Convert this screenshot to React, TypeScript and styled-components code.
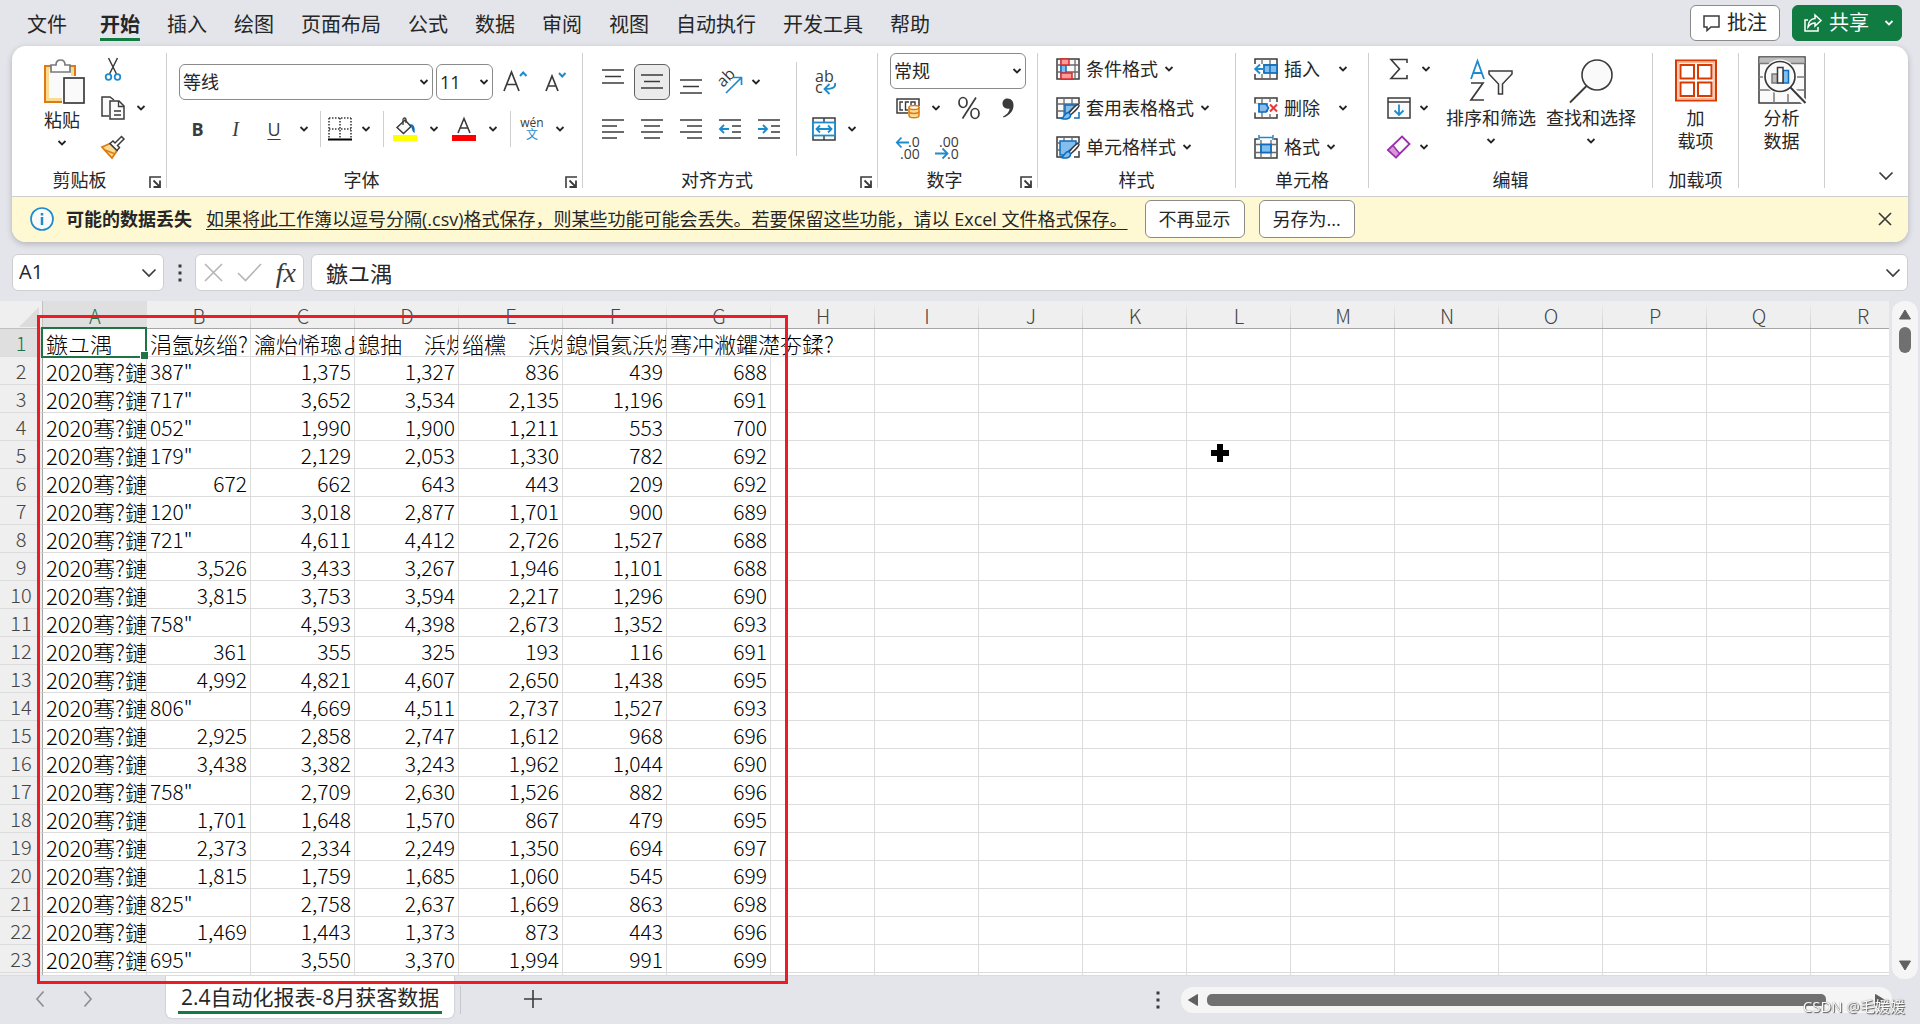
import React from "react";
import styled, { createGlobalStyle, css } from "styled-components";

const INK = "#3b3b3b";
const BLUE = "#1e8bcd";
const DEEP = "#0f6cbd";
const SKY = "#83beec";
const GREEN = "#107c41";
const LINE = "#cfcfcf";

const UI_FONT = `"Open Sans", "Noto Sans CJK SC", sans-serif`;
const CELL_FONT = `"Noto Sans CJK SC", sans-serif`;

const GlobalStyle = createGlobalStyle`
  * { box-sizing: border-box; }
  body { margin: 0; background: #e4e5ea; }
  button, input, select { font: inherit; color: inherit; margin: 0; }
  button { padding: 0; border: 0; background: none; }
  svg { flex: none; overflow: visible; }
`;

const Window = styled.div`
  display: flex;
  flex-direction: column;
  height: 100vh;
  overflow: hidden;
  font-family: ${UI_FONT};
  font-size: 18px;
  line-height: 20px;
  color: #262626;
`;

/* ---------- top bar ---------- */
const TopBar = styled.header`
  display: flex;
  justify-content: space-between;
  height: 46px;
  flex: none;
  padding: 5px 18px 5px 27px;
`;
const Tabs = styled.nav`
  display: flex;
  align-items: flex-start;
  gap: 27px;
  padding-top: 5px;
`;
const Tab = styled.a<{ $active?: boolean }>`
  height: 31px;
  font-size: 20px;
  line-height: 30px;
  text-decoration: none;
  color: inherit;
  white-space: nowrap;
  font-weight: ${(p) => (p.$active ? 700 : 400)};
  background: linear-gradient(${(p) => (p.$active ? GREEN : "transparent")} 0 100%) bottom / 100% 3px no-repeat;
  &:first-child { margin-right: 6px; }
`;
const TopActions = styled.div`
  display: flex;
  gap: 12px;
`;
const TopButton = styled.button<{ $primary?: boolean }>`
  display: flex;
  align-items: center;
  gap: 7px;
  height: 36px;
  padding: 0 12px;
  font-size: 20px;
  border-radius: 6px;
  border: 1px solid ${(p) => (p.$primary ? GREEN : "#8a8a8a")};
  background: ${(p) => (p.$primary ? GREEN : "#fff")};
  color: ${(p) => (p.$primary ? "#fff" : "#262626")};
  ${(p) => p.$primary && css`padding: 0 7px 0 11px; & > svg:last-child { margin-left: 8px; }`}
`;

/* ---------- ribbon ---------- */
const Panel = styled.section`
  flex: none;
  margin: 0 12px;
  border-radius: 14px;
  background: #fff;
  box-shadow: 0 2px 6px rgba(0, 0, 0, 0.22);
  overflow: hidden;
`;
const Ribbon = styled.div`
  display: flex;
  padding: 7px 0 8px;
  border-bottom: 1px solid ${LINE};
`;
const Group = styled.section<{ $w: number }>`
  display: flex;
  flex-direction: column;
  flex: none;
  width: ${(p) => p.$w}px;
  height: 135px;
  border-right: 1px solid ${LINE};
`;
const Body = styled.div<{ $pad?: number; $center?: boolean }>`
  flex: 1;
  display: flex;
  align-items: flex-start;
  padding-left: ${(p) => p.$pad ?? 0}px;
  justify-content: ${(p) => (p.$center ? "center" : "flex-start")};
`;
const Footer = styled.div<{ $shift?: boolean }>`
  display: flex;
  align-items: flex-end;
  height: 18px;
  line-height: 18px;
  padding-left: ${(p) => (p.$shift ? 7 : 0)}px;
`;
const FooterLabel = styled.span`
  flex: 1;
  text-align: center;
  line-height: 16px;
`;
const Launcher = styled.button`
  display: flex;
  width: 26px;
  padding-left: 9px;
`;
const Stack = styled.div`
  display: flex;
  flex-direction: column;
  gap: 13px;
  padding-top: 3px;
`;
const Line = styled.div<{ $gap?: number }>`
  display: flex;
  align-items: center;
  height: 26px;
  gap: ${(p) => p.$gap ?? 0}px;
`;
const ToolRows = styled.div`
  display: flex;
  flex-direction: column;
  gap: 11px;
  padding-top: 11px;
`;
const ToolRow = styled.div<{ $gap?: number }>`
  display: flex;
  align-items: center;
  height: 36px;
  gap: ${(p) => p.$gap ?? 0}px;
`;
const Tool = styled.button<{ $w?: number; $on?: boolean }>`
  display: flex;
  align-items: center;
  justify-content: center;
  width: ${(p) => p.$w ?? 36}px;
  height: 36px;
  border-radius: 6px;
  ${(p) => p.$on && css`background: #ebebeb; border: 1px solid #616161;`}
`;
const IconButton = styled.button`
  display: flex;
  align-items: center;
  justify-content: center;
  width: 24px;
  height: 26px;
`;
const ClipButton = styled(IconButton)`
  margin-left: 16px;
`;
const NumberStack = styled.div`
  display: flex;
  flex-direction: column;
  gap: 13px;
  & > label { margin-bottom: -7px; }
`;
const NumberLine = styled(Line)`
  padding-left: 6px;
`;
const Rule = styled.span<{ $h?: number }>`
  width: 1px;
  height: ${(p) => p.$h ?? 36}px;
  margin: 0 5px;
  background: ${LINE};
`;
const TallRule = styled.span`
  width: 1px;
  height: 94px;
  margin: 9px 11px 0 9px;
  background: ${LINE};
`;
const Letter = styled.span<{ $kind: "b" | "i" | "u" }>`
  font-size: 18px;
  color: ${INK};
  ${(p) => p.$kind === "b" && css`font-weight: 700;`}
  ${(p) => p.$kind === "i" && css`font-family: "Liberation Serif", serif; font-style: italic; font-size: 20px;`}
  ${(p) => p.$kind === "u" && css`text-decoration: underline; text-underline-offset: 3px; text-decoration-thickness: 1px;`}
`;
const Pinyin = styled.span`
  display: flex;
  flex-direction: column;
  align-items: center;
  font-size: 12px;
  line-height: 12px;
  color: ${INK};
  & > span { color: ${BLUE}; }
`;
const SelectBox = styled.label<{ $w: number }>`
  position: relative;
  display: flex;
  width: ${(p) => p.$w}px;
  height: 36px;
  & > svg { position: absolute; right: 4px; top: 14px; pointer-events: none; }
`;
const Select = styled.select`
  appearance: none;
  width: 100%;
  padding: 0 0 1px 3px;
  border: 1px solid #8a8a8a;
  border-radius: 6px;
  background: #fff;
`;
const BigButton = styled.button<{ $w: number; $top?: number; $gap?: number }>`
  display: flex;
  flex-direction: column;
  align-items: center;
  flex: none;
  width: ${(p) => p.$w}px;
  padding-top: ${(p) => p.$top ?? 6}px;
  line-height: 23px;
  white-space: nowrap;
  & > span { margin: ${(p) => p.$gap ?? 3}px 0 7px; }
`;
const LabelButton = styled.button<{ $wide?: boolean }>`
  display: flex;
  align-items: center;
  height: 26px;
  gap: 6px;
  line-height: 24px;
  white-space: nowrap;
  & > svg:last-child { margin-left: ${(p) => (p.$wide ? 12 : 0)}px; }
`;
const Collapse = styled.button`
  margin-left: auto;
  align-self: flex-end;
  padding: 0 14px 4px;
`;

/* ---------- notice ---------- */
const Notice = styled.div`
  display: flex;
  align-items: center;
  height: 45px;
  padding: 0 16px 2px 18px;
  background: #fef9d3;
  white-space: nowrap;
`;
const NoticeTitle = styled.strong`
  margin: 0 14px 0 12px;
`;
const NoticeLink = styled.a`
  color: inherit;
  text-underline-offset: 3px;
  text-decoration-thickness: 1px;
  margin-right: 17px;
`;
const NoticeButton = styled.button`
  height: 38px;
  padding: 0 13px;
  margin-right: 14px;
  border: 1px solid #8a8a8a;
  border-radius: 6px;
  background: #fff;
`;
const Close = styled.button`
  display: flex;
  margin-left: auto;
`;

/* ---------- formula bar ---------- */
const FormulaBar = styled.div`
  display: flex;
  align-items: center;
  flex: none;
  height: 37px;
  margin: 12px 12px 10px;
`;
const Field = styled.div<{ $w?: number }>`
  display: flex;
  align-items: center;
  height: 37px;
  border: 1px solid ${LINE};
  border-radius: 6px;
  background: #fff;
  ${(p) => (p.$w ? css`width: ${p.$w}px; flex: none;` : css`flex: 1;`)}
  padding-right: 6px;
`;
const TextInput = styled.input<{ $size: number; $pad: number }>`
  flex: 1;
  min-width: 0;
  border: 0;
  outline: 0;
  background: none;
  padding: 0 0 2px ${(p) => p.$pad}px;
  font-size: ${(p) => p.$size}px;
`;
const DotsWrap = styled.span`
  display: flex;
  justify-content: center;
  width: 31px;
`;
const BottomDots = styled(DotsWrap)`
  margin-right: 8px;
`;
const FormulaTools = styled(Field)`
  justify-content: space-between;
  padding: 0 7px 0 8px;
  margin-right: 7px;
  & > button { display: flex; }
`;
const Fx = styled.button`
  font-family: "Liberation Serif", serif;
  font-style: italic;
  font-size: 28px;
  line-height: 28px;
  color: ${INK};
`;

/* ---------- sheet ---------- */
const Sheet = styled.main`
  position: relative;
  display: flex;
  flex: 1;
  min-height: 0;
  padding-right: 2px;
`;
const GridWrap = styled.div`
  flex: 1;
  min-width: 0;
  overflow: hidden;
  background: #fff;
  border-bottom: 1px solid #dcdcdc;
  margin-right: 3px;
`;
const Table = styled.table`
  table-layout: fixed;
  width: 1915px;
  border-collapse: separate;
  border-spacing: 0;
  font-family: ${CELL_FONT};
  font-weight: 300;
  font-size: 21px;
  line-height: 24px;
  color: #000;
`;
const RowHeadCol = styled.col`
  width: 43px;
`;
const DataCol = styled.col`
  width: 104px;
`;
const ColHead = styled.th<{ $on?: boolean }>`
  height: 28px;
  padding: 2px 0 0;
  font-weight: 300;
  font-size: 20px;
  line-height: 22px;
  color: ${(p) => (p.$on ? "#1e7145" : "#444")};
  background: ${(p) =>
    p.$on
      ? "#dfdfdf"
      : "linear-gradient(#efefef, #cfcfcf) right / 1px 100% no-repeat, #efefef"};
  border-bottom: 1px solid #a6a6a6;
`;
const Corner = styled.td`
  height: 28px;
  padding: 4px 3px 0 19px;
  background: #efefef;
  border-right: 1px solid #c0c0c0;
  border-bottom: 1px solid #c0c0c0;
  & > svg { display: block; }
`;
const RowHead = styled.th<{ $on?: boolean }>`
  height: 28px;
  padding: 1px 0 0;
  font-weight: 300;
  font-size: 20px;
  color: ${(p) => (p.$on ? "#1e7145" : "#444")};
  background: ${(p) => (p.$on ? "#dfdfdf" : "#efefef")};
  border-right: 1px solid #a6a6a6;
  border-bottom: 1px solid #dcdcdc;
`;
const Cell = styled.td<{ $num?: boolean; $big?: boolean; $clip?: boolean; $spill?: boolean; $sel?: boolean }>`
  height: 28px;
  padding: 1px 3px 0;
  font-size: ${(p) => (p.$big ? 22 : 21)}px;
  text-align: ${(p) => (p.$num ? "right" : "left")};
  white-space: nowrap;
  overflow: ${(p) => (p.$clip ? "hidden" : "visible")};
  text-overflow: clip;
  border-right: 1px solid #dcdcdc;
  border-bottom: 1px solid #dcdcdc;
  ${(p) => p.$spill && css`border-right-color: transparent; position: relative; z-index: 1;`}
  ${(p) => p.$sel && css`position: relative; z-index: 2;`}
`;
const Selection = styled.span`
  position: absolute;
  inset: -2px -1px -2px -2px;
  border: 2px solid #217346;
  &::after {
    content: "";
    position: absolute;
    right: -3px;
    bottom: -3px;
    width: 7px;
    height: 7px;
    background: #217346;
    border-top: 1px solid #fff;
    border-left: 1px solid #fff;
  }
`;
const Frame = styled.div`
  position: absolute;
  left: 37px;
  top: 14px;
  width: 751px;
  bottom: -8px;
  border: 3px solid #ed1c24;
  pointer-events: none;
  z-index: 5;
`;
const Pointer = styled.svg`
  position: absolute;
  left: 1210px;
  top: 142px;
`;
const VScroll = styled.div`
  display: flex;
  flex-direction: column;
  align-items: center;
  width: 26px;
  margin-bottom: -3px;
  padding: 8px 0 8px;
  border-radius: 12px;
  background: #f5f5f5;
`;
const VThumb = styled.div`
  width: 12px;
  height: 26px;
  margin: 7px 0 auto;
  border-radius: 6px;
  background: #707070;
`;

/* ---------- bottom bar ---------- */
const BottomBar = styled.footer`
  display: flex;
  align-items: center;
  flex: none;
  height: 48px;
  padding-right: 28px;
`;
const SheetNav = styled.div`
  display: flex;
  gap: 38px;
  width: 166px;
  padding: 0 0 2px 35px;
  & > button { display: flex; }
`;
const SheetTab = styled.a`
  align-self: flex-start;
  height: 42px;
  padding: 7px 12px 0;
  border-radius: 0 0 6px 6px;
  background: #fff;
  box-shadow: 0 0 2px rgba(0, 0, 0, 0.25);
  clip-path: inset(0 -2px -3px -2px);
  color: inherit;
  text-decoration: none;
  font-size: 21px;
  line-height: 28px;
  white-space: nowrap;
  & > span {
    display: block;
    border-bottom: 3px solid ${GREEN};
    padding: 0 3px;
  }
`;
const AddSheet = styled.button`
  display: flex;
  margin-left: 63px;
  padding-bottom: 2px;
`;
const TabRule = styled.span`
  width: 1px;
  height: 28px;
  margin-left: 6px;
  background: #c8c8cc;
`;
const HScroll = styled.div`
  display: flex;
  align-items: center;
  width: 711px;
  height: 26px;
  padding: 0 6px;
  border-radius: 12px;
  background: #f5f5f5;
`;
const HThumb = styled.div`
  flex: 1;
  height: 12px;
  margin: 0 48px 0 8px;
  border-radius: 5px;
  background: #707070;
`;
const Spacer = styled.span`
  flex: 1;
`;
const Watermark = styled.span`
  position: fixed;
  right: 15px;
  bottom: 8px;
  font-size: 15px;
  color: #fafafa;
  text-shadow: 1px 1px 1px #555, 0 0 1px #777;
`;

/* ---------- icons ---------- */
type IconProps = { w?: number; h?: number; children: React.ReactNode };
const Icon = ({ w = 24, h = 24, children }: IconProps) => (
  <svg width={w} height={h} viewBox={`0 0 ${w} ${h}`} fill="none" stroke={INK} strokeWidth="1.5" aria-hidden="true">
    {children}
  </svg>
);
const Chevron = ({ color = "#262626" }: { color?: string }) => (
  <svg width="10" height="8" viewBox="0 0 10 8" fill="none" stroke={color} strokeWidth="1.8" aria-hidden="true">
    <path d="M1.5 2L5 5.5L8.5 2" />
  </svg>
);
const BigChevron = () => (
  <svg width="16" height="10" viewBox="0 0 16 10" fill="none" stroke={INK} strokeWidth="1.7" aria-hidden="true">
    <path d="M1.5 1.5L8 8L14.5 1.5" />
  </svg>
);
const LaunchIcon = () => (
  <Icon w={12} h={12}>
    <path d="M1 12V1H12" strokeWidth="1.6" />
    <path d="M4.5 4.5L10.5 10.5M11 4.5V11H4.5" strokeWidth="1.8" />
  </Icon>
);
const Dots = () => (
  <Icon w={4} h={18}>
    <path d="M2 0.5V3.5M2 7.500V10.500M2 14.500V17.500" strokeWidth="3" />
  </Icon>
);
const PasteIcon = () => (
  <Icon w={46} h={45}>
    <rect x="6" y="7" width="30" height="36" fill="#f8dc94" stroke="#e07a10" strokeWidth="2" />
    <rect x="10" y="10" width="22" height="29" fill="#fafafa" stroke="none" />
    <path d="M12 13V6H17C17 2.500 19 1 21.500 1S26 2.500 26 6H31V13Z" fill="#fff" stroke="#7a7a7a" strokeWidth="1.7" />
    <rect x="23" y="17" width="23" height="28" fill="#fff" stroke="none" />
    <rect x="25" y="19" width="20" height="25" fill="#fafafa" strokeWidth="1.7" />
  </Icon>
);
const CutIcon = () => (
  <Icon>
    <path d="M7.500 1L15.500 17M16.500 1L8.500 17" />
    <circle cx="7.500" cy="20" r="2.800" stroke={BLUE} strokeWidth="1.800" />
    <circle cx="16.500" cy="20" r="2.800" stroke={BLUE} strokeWidth="1.800" />
  </Icon>
);
const CopyIcon = () => (
  <Icon>
    <path d="M8 20H1V1H9L13 4" fill="#fafafa" />
    <path d="M9 5H18L23 10V23H9Z" fill="#fafafa" />
    <path d="M17.500 5V10.500H23M13 15H20M13 19H20" strokeWidth="1.300" />
  </Icon>
);
const BrushIcon = () => (
  <Icon>
    <path d="M1 12L9 8.500L16 15.500L11 23Z" fill="#f8dc94" stroke="#e07a10" strokeWidth="1.800" />
    <path d="M4 15L13 18.500" stroke="#e07a10" />
    <path d="M9 8.500L12 6L14 8L20.500 1.500L23 4L16.500 10.500L18.500 12.500L16 15.500Z" fill="#fff" />
  </Icon>
);
const FontSizeIcon = ({ up }: { up?: boolean }) =>
  up ? (
    <Icon w={24} h={24}>
      <path d="M1 21L8.500 2L16 21M3.500 14.500H13.500" strokeWidth="1.700" />
      <path d="M17 6L20.200 2.500L23.500 6" stroke={BLUE} strokeWidth="2" />
    </Icon>
  ) : (
    <Icon w={22} h={24}>
      <path d="M1 21L7 6L13 21M3 16H11" strokeWidth="1.700" />
      <path d="M14 3L17.200 6.500L20.500 3" stroke={BLUE} strokeWidth="2" />
    </Icon>
  );
const BorderIcon = () => (
  <Icon>
    <path d="M1 1H23M1 12H23M1 1V21M12 1V21M23 1V21" strokeDasharray="1.500 1.500" strokeWidth="1.600" />
    <path d="M0 22.500H24" stroke="#000" strokeWidth="2" />
  </Icon>
);
const FillIcon = () => (
  <Icon>
    <path d="M4 10.500L12 3L18 9.500L10.500 16.500Z" fill="#fafafa" />
    <path d="M10 8V2.500C10 .500 13 .500 13 2.500V6" strokeWidth="1.300" />
    <path d="M17 7C20.500 7 22.500 10 21.500 16C20 15.500 19 13 18.500 10.500Z" fill={DEEP} stroke="none" />
    <rect x="0" y="18" width="24" height="6" fill="#ffff00" stroke="none" />
  </Icon>
);
const FontColorIcon = () => (
  <Icon>
    <path d="M6 16L12 1.500L18 16M8 11H16" strokeWidth="1.600" />
    <rect x="0" y="18" width="24" height="6" fill="#ff0000" stroke="none" />
  </Icon>
);
const LinesIcon = ({ d, dy = 0 }: { d: [number, number][]; dy?: number }) => (
  <Icon w={22} h={24}>
    {d.map(([a, b], i) => (
      <path key={i} d={`M${a} ${3 + dy + i * (d.length === 4 ? 6 : 6.5)}H${b}`} strokeWidth="1.600" />
    ))}
  </Icon>
);
const IndentIcon = ({ right }: { right?: boolean }) => (
  <Icon w={22} h={24}>
    <path d="M0 3H22M13 9H22M13 15H22M0 21H22" strokeWidth="1.600" />
    <path d={right ? "M0 12H9M5 8L9 12L5 16" : "M10 12H1M5 8L1 12L5 16"} stroke={BLUE} strokeWidth="1.900" />
  </Icon>
);
const OrientIcon = () => (
  <Icon w={26} h={26}>
    <text x="0" y="0" transform="translate(6 19) rotate(-45)" fontSize="16" fill={INK} stroke="none">ab</text>
    <path d="M9 24L24 9M16.500 8.500H24.500V16" stroke={BLUE} strokeWidth="1.700" />
  </Icon>
);
const WrapIcon = () => (
  <Icon w={22} h={26}>
    <text fontSize="16" fill={INK} stroke="none">
      <tspan x="0" y="13">ab</tspan>
      <tspan x="0" y="24">c</tspan>
    </text>
    <path d="M20 14C21 18 18.500 20 10 20M14.500 15L9.500 20L14.500 25" stroke={BLUE} strokeWidth="1.800" />
  </Icon>
);
const MergeIcon = () => (
  <Icon>
    <rect x="1" y="1" width="22" height="22" fill="#fafafa" />
    <path d="M12 1V23" />
    <rect x="1" y="5.500" width="22" height="13" fill="#fff" stroke={BLUE} strokeWidth="1.800" />
    <path d="M4.500 12H19.500M8 8.500L4.500 12L8 15.500M16 8.500L19.500 12L16 15.500" stroke={BLUE} strokeWidth="1.800" />
  </Icon>
);
const MoneyIcon = () => (
  <Icon w={24} h={22}>
    <path d="M12 16H1V2H23V9" />
    <path d="M7 5H4V13H7M13 5H9.500V13H12M15 8V5H19V8" strokeWidth="1.400" />
    <path d="M13 10V18.500C13 21.500 23 21.500 23 18.500V10" fill="#f8dc94" stroke="#e07a10" />
    <ellipse cx="18" cy="10.500" rx="5" ry="2" fill="#fff" stroke="#e07a10" />
    <path d="M13 14.500C13 17 23 17 23 14.500" stroke="#e07a10" />
  </Icon>
);
const PercentIcon = () => (
  <Icon>
    <ellipse cx="6" cy="6.500" rx="4" ry="5" strokeWidth="1.700" />
    <ellipse cx="18" cy="17.500" rx="4" ry="5" strokeWidth="1.700" />
    <path d="M19 1.500L5.500 22.500" strokeWidth="1.700" />
  </Icon>
);
const CommaIcon = () => (
  <Icon w={12} h={22}>
    <path d="M5.500 1.500C9.500 1.500 11.500 4.500 11.500 8.500C11.500 14 7.500 18.500 1.500 20.500L1 19.500C5 17.500 7.500 14.500 7.500 11.500C3.500 12.500 .500 10 .500 6.500C.500 3.500 2.500 1.500 5.500 1.500Z" fill={INK} stroke="none" />
  </Icon>
);
const DecimalIcon = ({ less }: { less?: boolean }) => (
  <Icon w={25} h={25}>
    <text fontSize="14" fill={INK} stroke="none">
      <tspan x={less ? 4 : 12} y="12">{less ? ".00" : ".0"}</tspan>
      <tspan x={less ? 12 : 4} y="24">{less ? ".0" : ".00"}</tspan>
    </text>
    <path d={less ? "M0 18.500H12M7.500 13.500L12.500 18.500L7.500 23.500" : "M13 7.500H1M5.500 2.500L.800 7.500L5.500 12.500"} stroke={BLUE} strokeWidth="1.800" />
  </Icon>
);
const GridLines = () => (
  <>
    <rect x="1" y="2" width="22" height="20" fill="#fafafa" />
    <path d="M1 8H23M1 15H23M8 2V22M16 2V22" stroke="#6a6a6a" strokeWidth="1.300" />
  </>
);
const CondIcon = () => (
  <Icon>
    <rect x="1" y="2" width="22" height="20" fill="#fafafa" />
    <path d="M1 8H23M1 15H23M5 2V22M19 2V22" stroke="#6a6a6a" strokeWidth="1.300" />
    <rect x="5" y="8" width="5" height="8" fill={SKY} stroke={DEEP} />
    <rect x="5" y="2" width="8" height="6" fill="#ff9a9a" stroke="#d92b2b" />
    <rect x="5" y="16" width="11" height="6" fill="#ff9a9a" stroke="#d92b2b" />
  </Icon>
);
const PaintOver = () => (
  <>
    <path d="M23 8L14 18L9 23H24V8Z" fill="#fff" stroke="none" />
    <path d="M22.500 8.500C24 9.500 22.500 12 14.500 19L12.500 17.500C17 12 21 8 22.500 8.500Z" fill="#fff" strokeWidth="1.400" />
    <path d="M12.500 16.500C9 16 8.500 21.500 5.500 22.500C9 23.500 15 23.500 14.500 18.500Z" fill={SKY} stroke={DEEP} strokeWidth="1.500" />
  </>
);
const TableStyleIcon = () => (
  <Icon>
    <GridLines />
    <path d="M9 9H20L9 20Z" fill={SKY} stroke={DEEP} />
    <PaintOver />
    <path d="M23 16V22H18" stroke={DEEP} />
  </Icon>
);
const CellStyleIcon = () => (
  <Icon>
    <GridLines />
    <path d="M4 6H20V10L8 20H4Z" fill={SKY} stroke={DEEP} />
    <PaintOver />
    <path d="M23 16V22H18" />
  </Icon>
);
const InsertIcon = () => (
  <Icon>
    <GridLines />
    <rect x="10" y="8" width="13" height="8" fill={SKY} stroke={DEEP} strokeWidth="1.700" />
    <path d="M16 8V16" stroke={DEEP} />
    <rect x="0" y="7" width="9" height="10" fill="#fff" stroke="none" />
    <path d="M11 12H1M6 7.500L1.200 12L6 16.500" stroke={BLUE} strokeWidth="1.900" />
  </Icon>
);
const DeleteIcon = () => (
  <Icon>
    <GridLines />
    <rect x="0" y="7.500" width="4" height="9" fill="#fff" stroke="none" />
    <rect x="14" y="6" width="10" height="12" fill="#fff" stroke="none" />
    <path d="M5 8H12L14.500 12L12 16H5Z" fill={SKY} stroke={DEEP} strokeWidth="1.700" />
    <path d="M16 8.500L23 15.500M23 8.500L16 15.500" stroke="#e8383d" strokeWidth="2" />
  </Icon>
);
const FormatIcon = () => (
  <Icon>
    <rect x="1" y="4" width="22" height="19" fill="#fafafa" />
    <path d="M1 9.500H23M1 17.500H23M7 4V23M17 4V23" stroke="#6a6a6a" strokeWidth="1.300" />
    <rect x="4" y="0" width="16" height="5" fill="#fff" stroke="none" />
    <path d="M5 0V5M19 0V5M5 2.500H19" stroke={BLUE} />
    <rect x="7" y="9.500" width="10" height="8" fill={SKY} stroke={DEEP} strokeWidth="1.700" />
  </Icon>
);
const SumIcon = () => (
  <Icon>
    <path d="M20 6V2.500H4L12.500 12L4 21.500H20V18" strokeWidth="1.600" />
  </Icon>
);
const FillDownIcon = () => (
  <Icon>
    <rect x="1" y="2" width="22" height="20" fill="#fafafa" />
    <path d="M1 6H23" />
    <path d="M12 8.500V19M7.500 14.500L12 19L16.500 14.500" stroke={BLUE} strokeWidth="1.800" />
  </Icon>
);
const EraserIcon = () => (
  <Icon>
    <path d="M15 1.500L22.500 9L9 22.500L1 15Z" fill="#fafafa" stroke="#9b2fae" strokeWidth="1.800" />
    <path d="M6 10.500L12.500 18.500L9 22.500L1 15Z" fill="#d896dc" stroke="#9b2fae" strokeWidth="1.500" />
  </Icon>
);
const SortIcon = () => (
  <Icon w={44} h={45}>
    <path d="M2 20L8.500 2L15 20M4 14H13" stroke={BLUE} strokeWidth="1.800" />
    <path d="M2 24H14L2 41H15" strokeWidth="1.700" />
    <path d="M20 12H43V15L33.500 25V35H29.500V25L20 15Z" fill="#fafafa" />
  </Icon>
);
const FindIcon = () => (
  <Icon w={44} h={45}>
    <circle cx="28" cy="16" r="15" fill="#fafafa" strokeWidth="1.600" />
    <path d="M17.500 27L1 43.500" strokeWidth="1.800" />
  </Icon>
);
const AddinIcon = () => (
  <Icon w={42} h={44}>
    <rect x="1" y="1.500" width="40" height="40" stroke="#d83b01" strokeWidth="2" />
    <rect x="3" y="3.500" width="36" height="36" stroke="#f6b79d" strokeWidth="1.500" />
    {[5.5, 23].map((x) =>
      [6, 23.5].map((y) => (
        <rect key={`${x}-${y}`} x={x} y={y} width="13.500" height="13.500" stroke="#d83b01" strokeWidth="2" />
      ))
    )}
  </Icon>
);
const AnalyzeIcon = () => (
  <Icon w={48} h={48}>
    <rect x="1" y="1" width="46" height="46" fill="#fafafa" />
    <rect x="1.500" y="1.500" width="45" height="5.500" fill="#bdbdbd" stroke="none" />
    <path d="M1 7.500H47M1 21H8M38 21H47M1 34H13M36 34H47M16 36V47M30 38V47" stroke="#7a7a7a" strokeWidth="1.500" />
    <circle cx="22" cy="20.500" r="17" fill="#fff" stroke="none" />
    <circle cx="22" cy="20.500" r="15" fill="#fafafa" strokeWidth="1.700" />
    <path d="M33 32L48 48" stroke="#fff" strokeWidth="6" />
    <path d="M32.500 31.500L47.500 47" strokeWidth="2" />
    <rect x="14" y="18" width="5.500" height="9" fill="#bdbdbd" stroke="#7a7a7a" />
    <rect x="25" y="14.500" width="5.500" height="12.500" fill={SKY} stroke={DEEP} />
    <rect x="19.500" y="11.500" width="5.500" height="15.500" fill="#fff" />
  </Icon>
);
const CommentIcon = () => (
  <Icon w={17} h={18}>
    <path d="M1 2H16V13H8L4 16.500V13H1Z" />
  </Icon>
);
const ShareIcon = () => (
  <svg width="18" height="18" viewBox="0 0 18 18" fill="none" stroke="#fff" strokeWidth="1.500" aria-hidden="true">
    <path d="M4 6H1V17H14V13" />
    <path d="M11 1L17 6.500L11 12V9C8 9 6 10 4 13C4 8 7 4.500 11 4.500Z" />
  </svg>
);
const InfoIcon = () => (
  <Icon>
    <circle cx="12" cy="12" r="11" fill="#fafafa" stroke={BLUE} strokeWidth="1.700" />
    <path d="M12 6V8.500M12 10V18" stroke={BLUE} strokeWidth="2.500" />
  </Icon>
);

/* ---------- data ---------- */
const COLS = "ABCDEFGHIJKLMNOPQR".split("");
const HEAD = ["鏃ユ湡", "涓氬姟缁?", "瀹炲悕璁よ瘉", "鎴抽\u3000浜烘暟", "缁欓\u3000浜烘暟", "鎴愪氦浜烘暟", "骞冲潎鑺濋夯鍒?"];
const ROWS = [
  '387"|1,375|1,327|836|439|688',
  '717"|3,652|3,534|2,135|1,196|691',
  '052"|1,990|1,900|1,211|553|700',
  '179"|2,129|2,053|1,330|782|692',
  "672|662|643|443|209|692",
  '120"|3,018|2,877|1,701|900|689',
  '721"|4,611|4,412|2,726|1,527|688',
  "3,526|3,433|3,267|1,946|1,101|688",
  "3,815|3,753|3,594|2,217|1,296|690",
  '758"|4,593|4,398|2,673|1,352|693',
  "361|355|325|193|116|691",
  "4,992|4,821|4,607|2,650|1,438|695",
  '806"|4,669|4,511|2,737|1,527|693',
  "2,925|2,858|2,747|1,612|968|696",
  "3,438|3,382|3,243|1,962|1,044|690",
  '758"|2,709|2,630|1,526|882|696',
  "1,701|1,648|1,570|867|479|695",
  "2,373|2,334|2,249|1,350|694|697",
  "1,815|1,759|1,685|1,060|545|699",
  '825"|2,758|2,637|1,669|863|698',
  "1,469|1,443|1,373|873|443|696",
  '695"|3,550|3,370|1,994|991|699',
].map((r) => ["2020骞?鏈", ...r.split("|")]);
const TABS = ["文件", "开始", "插入", "绘图", "页面布局", "公式", "数据", "审阅", "视图", "自动执行", "开发工具", "帮助"];

type GroupProps = { w: number; label?: string; launch?: boolean; shift?: boolean; children: React.ReactNode };
const RibbonGroup = ({ w, label, launch, shift, children }: GroupProps) => (
  <Group $w={w}>
    {children}
    <Footer $shift={shift}>
      <FooterLabel>{label}</FooterLabel>
      {launch && (
        <Launcher aria-label={`${label}设置`}>
          <LaunchIcon />
        </Launcher>
      )}
    </Footer>
  </Group>
);

const Drop = ({ w = 22, label }: { w?: number; label: string }) => (
  <Tool $w={w} aria-label={label}>
    <Chevron />
  </Tool>
);

const Picker = ({ w, label, value }: { w: number; label: string; value: string }) => (
  <SelectBox $w={w}>
    <Select aria-label={label} defaultValue={value}>
      <option>{value}</option>
    </Select>
    <Chevron />
  </SelectBox>
);

export default function App() {
  return (
    <Window>
      <GlobalStyle />
      <TopBar>
        <Tabs>
          {TABS.map((t) => (
            <Tab key={t} href="#" $active={t === "开始"}>{t}</Tab>
          ))}
        </Tabs>
        <TopActions>
          <TopButton><CommentIcon />批注</TopButton>
          <TopButton $primary><ShareIcon />共享<Chevron color="#fff" /></TopButton>
        </TopActions>
      </TopBar>

      <Panel>
        <Ribbon>
          <RibbonGroup w={155} label="剪贴板" launch shift>
            <Body $pad={27}>
              <BigButton $w={46} $gap={5}><PasteIcon /><span>粘贴</span><Chevron /></BigButton>
              <Stack>
                <Line><ClipButton aria-label="剪切"><CutIcon /></ClipButton></Line>
                <Line>
                  <ClipButton aria-label="复制"><CopyIcon /></ClipButton>
                  <Drop w={32} label="复制选项" />
                </Line>
                <Line><ClipButton aria-label="格式刷"><BrushIcon /></ClipButton></Line>
              </Stack>
            </Body>
          </RibbonGroup>

          <RibbonGroup w={416} label="字体" launch>
            <Body $pad={12}>
              <ToolRows>
                <ToolRow $gap={3}>
                  <Picker w={254} label="字体" value="等线" />
                  <Picker w={57} label="字号" value="11" />
                  <Tool $w={38} aria-label="增大字号"><FontSizeIcon up /></Tool>
                  <Tool $w={37} aria-label="减小字号"><FontSizeIcon /></Tool>
                </ToolRow>
                <ToolRow>
                  <Tool $w={37}><Letter $kind="b">B</Letter></Tool>
                  <Tool $w={39}><Letter $kind="i">I</Letter></Tool>
                  <Tool $w={38}><Letter $kind="u">U</Letter></Tool>
                  <Drop label="下划线选项" />
                  <Rule />
                  <Tool $w={28} aria-label="边框"><BorderIcon /></Tool>
                  <Drop w={24} label="边框选项" />
                  <Rule />
                  <Tool $w={32} aria-label="填充颜色"><FillIcon /></Tool>
                  <Drop w={26} label="填充选项" />
                  <Tool $w={34} aria-label="字体颜色"><FontColorIcon /></Tool>
                  <Drop w={24} label="颜色选项" />
                  <Rule />
                  <Tool $w={32}><Pinyin>wén<span>文</span></Pinyin></Tool>
                  <Drop w={24} label="拼音选项" />
                </ToolRow>
              </ToolRows>
            </Body>
          </RibbonGroup>

          <RibbonGroup w={295} label="对齐方式" launch>
            <Body $pad={12}>
              <ToolRows>
                <ToolRow $gap={3}>
                  <Tool aria-label="顶端对齐"><LinesIcon d={[[0, 22], [3, 19], [0, 22]]} dy={-3} /></Tool>
                  <Tool $on aria-label="垂直居中"><LinesIcon d={[[0, 22], [3, 19], [0, 22]]} dy={2} /></Tool>
                  <Tool aria-label="底端对齐"><LinesIcon d={[[0, 22], [3, 19], [0, 22]]} dy={7} /></Tool>
                  <Tool aria-label="方向"><OrientIcon /></Tool>
                  <Drop w={10} label="方向选项" />
                </ToolRow>
                <ToolRow $gap={3}>
                  <Tool aria-label="左对齐"><LinesIcon d={[[0, 22], [0, 15], [0, 22], [0, 15]]} /></Tool>
                  <Tool aria-label="居中"><LinesIcon d={[[0, 22], [3, 19], [0, 22], [3, 19]]} /></Tool>
                  <Tool aria-label="右对齐"><LinesIcon d={[[0, 22], [7, 22], [0, 22], [7, 22]]} /></Tool>
                  <Tool aria-label="减少缩进"><IndentIcon /></Tool>
                  <Tool aria-label="增加缩进"><IndentIcon right /></Tool>
                </ToolRow>
              </ToolRows>
              <TallRule />
              <ToolRows>
                <ToolRow><Tool aria-label="自动换行"><WrapIcon /></Tool></ToolRow>
                <ToolRow>
                  <Tool $w={32} aria-label="合并"><MergeIcon /></Tool>
                  <Drop w={24} label="合并选项" />
                </ToolRow>
              </ToolRows>
            </Body>
          </RibbonGroup>

          <RibbonGroup w={160} label="数字" launch>
            <Body $pad={12}>
              <NumberStack>
                <Picker w={136} label="数字格式" value="常规" />
                <NumberLine>
                  <IconButton aria-label="货币"><MoneyIcon /></IconButton>
                  <Drop w={32} label="货币选项" />
                  <Tool $w={34} aria-label="百分比"><PercentIcon /></Tool>
                  <Tool $w={44} aria-label="千位分隔"><CommaIcon /></Tool>
                </NumberLine>
                <NumberLine $gap={15}>
                  <IconButton aria-label="增加小数位"><DecimalIcon /></IconButton>
                  <IconButton aria-label="减少小数位"><DecimalIcon less /></IconButton>
                </NumberLine>
              </NumberStack>
            </Body>
          </RibbonGroup>

          <RibbonGroup w={198} label="样式">
            <Body $pad={18}>
              <Stack>
                <LabelButton><CondIcon />条件格式<Chevron /></LabelButton>
                <LabelButton><TableStyleIcon />套用表格格式<Chevron /></LabelButton>
                <LabelButton><CellStyleIcon />单元格样式<Chevron /></LabelButton>
              </Stack>
            </Body>
          </RibbonGroup>

          <RibbonGroup w={133} label="单元格">
            <Body $pad={18}>
              <Stack>
                <LabelButton $wide><InsertIcon />插入<Chevron /></LabelButton>
                <LabelButton $wide><DeleteIcon />删除<Chevron /></LabelButton>
                <LabelButton><FormatIcon />格式<Chevron /></LabelButton>
              </Stack>
            </Body>
          </RibbonGroup>

          <RibbonGroup w={284} label="编辑">
            <Body $pad={18}>
              <Stack>
                <Line><IconButton aria-label="求和"><SumIcon /></IconButton><Drop w={30} label="求和选项" /></Line>
                <Line><IconButton aria-label="填充"><FillDownIcon /></IconButton><Drop w={26} label="填充方向" /></Line>
                <Line><IconButton aria-label="清除"><EraserIcon /></IconButton><Drop w={26} label="清除选项" /></Line>
              </Stack>
              <BigButton $w={100}><SortIcon /><span>排序和筛选</span><Chevron /></BigButton>
              <BigButton $w={100}><FindIcon /><span>查找和选择</span><Chevron /></BigButton>
            </Body>
          </RibbonGroup>

          <RibbonGroup w={86} label="加载项">
            <Body $center>
              <BigButton $w={60} $gap={4}><AddinIcon /><span>加<br />载项</span></BigButton>
            </Body>
          </RibbonGroup>

          <RibbonGroup w={86}>
            <Body $center>
              <BigButton $w={60} $top={3} $gap={3}><AnalyzeIcon /><span>分析<br />数据</span></BigButton>
            </Body>
          </RibbonGroup>
          <Collapse aria-label="折叠功能区"><BigChevron /></Collapse>
        </Ribbon>

        <Notice>
          <InfoIcon />
          <NoticeTitle>可能的数据丢失</NoticeTitle>
          <NoticeLink href="#">如果将此工作簿以逗号分隔(.csv)格式保存，则某些功能可能会丢失。若要保留这些功能，请以 Excel 文件格式保存。</NoticeLink>
          <NoticeButton>不再显示</NoticeButton>
          <NoticeButton>另存为...</NoticeButton>
          <Close aria-label="关闭">
            <Icon w={14} h={14}><path d="M1 1L13 13M13 1L1 13" strokeWidth="1.700" /></Icon>
          </Close>
        </Notice>
      </Panel>

      <FormulaBar>
        <Field $w={152}>
          <TextInput $size={20} $pad={6} aria-label="名称框" defaultValue="A1" />
          <BigChevron />
        </Field>
        <DotsWrap><Dots /></DotsWrap>
        <FormulaTools $w={109}>
          <button aria-label="取消">
            <Icon w={19} h={19}><path d="M1 1L18 18M18 1L1 18" stroke="#b5b5b5" strokeWidth="1.600" /></Icon>
          </button>
          <button aria-label="输入">
            <Icon w={25} h={19}><path d="M1 10L8.500 17.500L24 1" stroke="#b5b5b5" strokeWidth="1.600" /></Icon>
          </button>
          <Fx>fx</Fx>
        </FormulaTools>
        <Field>
          <TextInput $size={22} $pad={14} aria-label="编辑栏" defaultValue={HEAD[0]} />
          <BigChevron />
        </Field>
      </FormulaBar>

      <Sheet>
        <GridWrap>
          <Table>
            <colgroup>
              <RowHeadCol />
              {COLS.map((c) => <DataCol key={c} />)}
            </colgroup>
            <thead>
              <tr>
                <Corner>
                  <svg width="20" height="20" viewBox="0 0 20 20" aria-hidden="true"><path d="M20 0V20H0Z" fill="#dcdcdc" /></svg>
                </Corner>
                {COLS.map((c) => <ColHead key={c} scope="col" $on={c === "A"}>{c}</ColHead>)}
              </tr>
            </thead>
            <tbody>
              <tr>
                <RowHead scope="row" $on>1</RowHead>
                {COLS.map((c, i) => (
                  <Cell key={c} $big $clip={i > 0 && i < 6} $sel={i === 0} $spill={i === 6}>
                    {HEAD[i]}
                    {i === 0 && <Selection />}
                  </Cell>
                ))}
              </tr>
              {ROWS.map((row, r) => (
                <tr key={r}>
                  <RowHead scope="row">{r + 2}</RowHead>
                  {COLS.map((c, i) => (
                    <Cell key={c} $big={i === 0} $clip={i === 0} $num={i > 0 && !!row[i] && !row[i].endsWith('"')}>
                      {row[i]}
                    </Cell>
                  ))}
                </tr>
              ))}
              <tr>
                <RowHead />
                {COLS.map((c) => <Cell key={c} />)}
              </tr>
            </tbody>
          </Table>
        </GridWrap>
        <VScroll>
          <svg width="14" height="11" viewBox="0 0 14 11" aria-hidden="true"><path d="M7 1L12.500 10H1.500Z" fill="#606060" stroke="#606060" strokeLinejoin="round" /></svg>
          <VThumb />
          <svg width="14" height="11" viewBox="0 0 14 11" aria-hidden="true"><path d="M7 10L12.500 1H1.500Z" fill="#606060" stroke="#606060" strokeLinejoin="round" /></svg>
        </VScroll>
        <Frame />
        <Pointer width="20" height="20" viewBox="0 0 20 20" aria-hidden="true">
          <path d="M7 1H13V7H19V13H13V19H7V13H1V7H7Z" fill="#000" />
        </Pointer>
      </Sheet>

      <BottomBar>
        <SheetNav>
          <button aria-label="上一张"><Icon w={10} h={18}><path d="M8.500 1.500L2 9L8.500 16.500" stroke="#8f8f8f" strokeWidth="1.700" /></Icon></button>
          <button aria-label="下一张"><Icon w={10} h={18}><path d="M1.500 1.500L8 9L1.500 16.500" stroke="#8f8f8f" strokeWidth="1.700" /></Icon></button>
        </SheetNav>
        <SheetTab href="#"><span>2.4自动化报表-8月获客数据</span></SheetTab>
        <TabRule />
        <AddSheet aria-label="新工作表"><Icon w={18} h={18}><path d="M9 0V18M0 9H18" strokeWidth="1.600" /></Icon></AddSheet>
        <Spacer />
        <BottomDots><Dots /></BottomDots>
        <HScroll>
          <svg width="12" height="14" viewBox="0 0 12 14" aria-hidden="true"><path d="M1.500 7L10.500 1.500V12.500Z" fill="#606060" stroke="#606060" strokeLinejoin="round" /></svg>
          <HThumb />
          <svg width="12" height="14" viewBox="0 0 12 14" aria-hidden="true"><path d="M10.500 7L1.500 1.500V12.500Z" fill="#606060" stroke="#606060" strokeLinejoin="round" /></svg>
        </HScroll>
      </BottomBar>
      <Watermark>CSDN @毛媛媛</Watermark>
    </Window>
  );
}
